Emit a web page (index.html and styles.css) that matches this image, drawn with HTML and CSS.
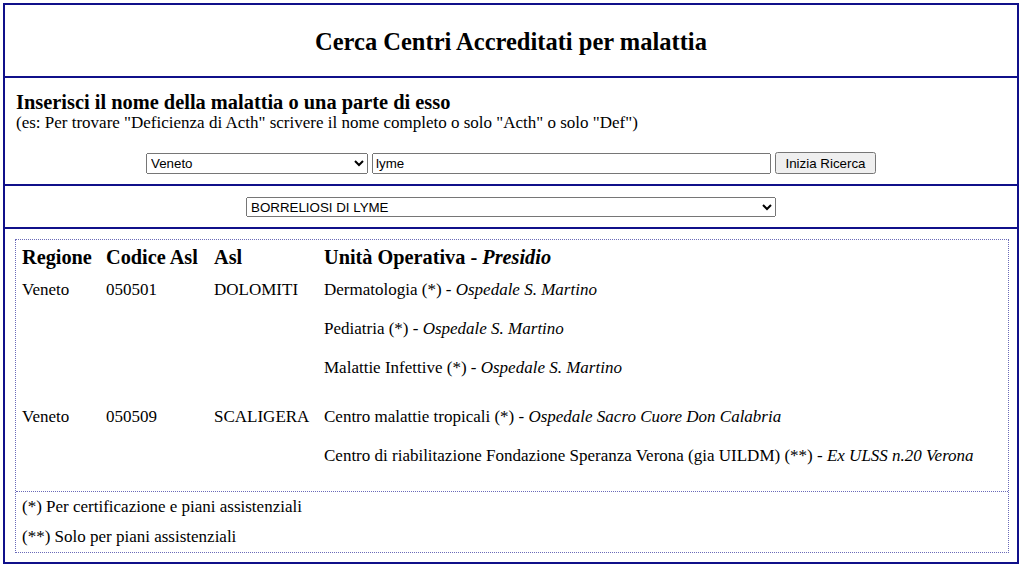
FILE: index.html
```html
<!DOCTYPE html>
<html lang="it">
<head>
<meta charset="utf-8">
<title>Cerca Centri Accreditati per malattia</title>
<link rel="stylesheet" href="styles.css">
</head>
<body>
<div class="page">
  <div class="sec title-sec">
    <h1 class="title">Cerca Centri Accreditati per malattia</h1>
  </div>
  <div class="sec search-sec">
    <h2 class="lead">Inserisci il nome della malattia o una parte di esso</h2>
    <p class="hint">(es: Per trovare "Deficienza di Acth" scrivere il nome completo o solo "Acth" o solo "Def")</p>
    <form class="form-row">
      <select class="ctl region"><option>Veneto</option></select>
      <input class="ctl query" type="text" value="lyme">
      <button class="ctl btn" type="button">Inizia Ricerca</button>
    </form>
  </div>
  <div class="sec pick-sec">
    <select class="ctl disease"><option>BORRELIOSI DI LYME</option></select>
  </div>
  <div class="sec result-sec">
    <div class="box">
      <div class="grid">
        <div class="th">Regione</div>
        <div class="th">Codice Asl</div>
        <div class="th">Asl</div>
        <div class="th">Unità Operativa - <i>Presidio</i></div>

        <div class="td">Veneto</div>
        <div class="td">050501</div>
        <div class="td">DOLOMITI</div>
        <div class="td units">
          <div class="unit">Dermatologia (*) - <i>Ospedale S. Martino</i></div>
          <div class="unit">Pediatria (*) - <i>Ospedale S. Martino</i></div>
          <div class="unit">Malattie Infettive (*) - <i>Ospedale S. Martino</i></div>
        </div>

        <div class="td grp">Veneto</div>
        <div class="td grp">050509</div>
        <div class="td grp">SCALIGERA</div>
        <div class="td units grp">
          <div class="unit">Centro malattie tropicali (*) - <i>Ospedale Sacro Cuore Don Calabria</i></div>
          <div class="unit">Centro di riabilitazione Fondazione Speranza Verona (gia UILDM) (**) - <i>Ex ULSS n.20 Verona</i></div>
        </div>
      </div>
      <div class="notes">
        <div class="note">(*) Per certificazione e piani assistenziali</div>
        <div class="note">(**) Solo per piani assistenziali</div>
      </div>
    </div>
  </div>
</div>
</body>
</html>
```

FILE: styles.css
```css
html, body {
  margin: 0;
  padding: 0;
  background: #ffffff;
}
body {
  font-family: "Liberation Serif", "Times New Roman", serif;
  font-size: 17px;
  color: #000;
  padding: 3px 5px 3px 3px;
}
.page {
  border: 2px solid #10108a;
  height: 561px;
  box-sizing: border-box;
  display: flex;
  flex-direction: column;
}
.sec {
  border-bottom: 2px solid #10108a;
  flex-shrink: 0;
}
.sec:last-child {
  border-bottom: none;
  flex: 1 1 auto;
}
.title-sec {
  height: 73px;
  box-sizing: border-box;
  display: flex;
  align-items: center;
  justify-content: center;
  padding-top: 3px;
}
.title {
  margin: 0;
  font-size: 24.5px;
  line-height: 28px;
  font-weight: bold;
}
.search-sec {
  height: 108px;
  box-sizing: border-box;
  padding: 12px 11px 0 11px;
}
.lead {
  margin: 0;
  font-size: 20.4px;
  line-height: 24px;
  font-weight: bold;
}
.hint {
  margin: 0;
  font-size: 17px;
  line-height: 18px;
}
.form-row {
  margin: 20px 0 0 0;
  display: flex;
  justify-content: center;
  align-items: center;
  gap: 4px;
}
.ctl {
  font-family: "Liberation Sans", Arial, sans-serif;
  font-size: 13.33px;
  box-sizing: border-box;
  margin: 0;
}
.region {
  width: 222px;
  height: 21px;
}
.query {
  width: 399px;
  height: 21px;
  padding: 1px 2px;
}
.btn {
  width: 101px;
  height: 22px;
}
.pick-sec {
  height: 43px;
  box-sizing: border-box;
  padding-top: 11px;
  display: flex;
  justify-content: center;
  align-items: flex-start;
}
.disease {
  width: 530px;
  height: 20px;
}
.result-sec {
  padding: 10px 8px 9px 10px;
  display: flex;
  flex-direction: column;
}
.box {
  border: 1px dotted #6a6ab8;
  flex: 1;
  display: flex;
  flex-direction: column;
}
.grid {
  display: grid;
  grid-template-columns: 84px 108px 110px 1fr;
  padding-left: 6px;
  flex: 1;
  align-content: start;
}
.th {
  font-size: 20.3px;
  font-weight: bold;
  padding-top: 4px;
  line-height: 26px;
}
.td {
  line-height: 39px;
}
.grp {
  margin-top: 10px;
}
.unit {
  line-height: 39px;
  white-space: nowrap;
}
.notes {
  border-top: 1px dotted #6a6ab8;
  padding-left: 6px;
}
.note {
  line-height: 30px;
}
```
